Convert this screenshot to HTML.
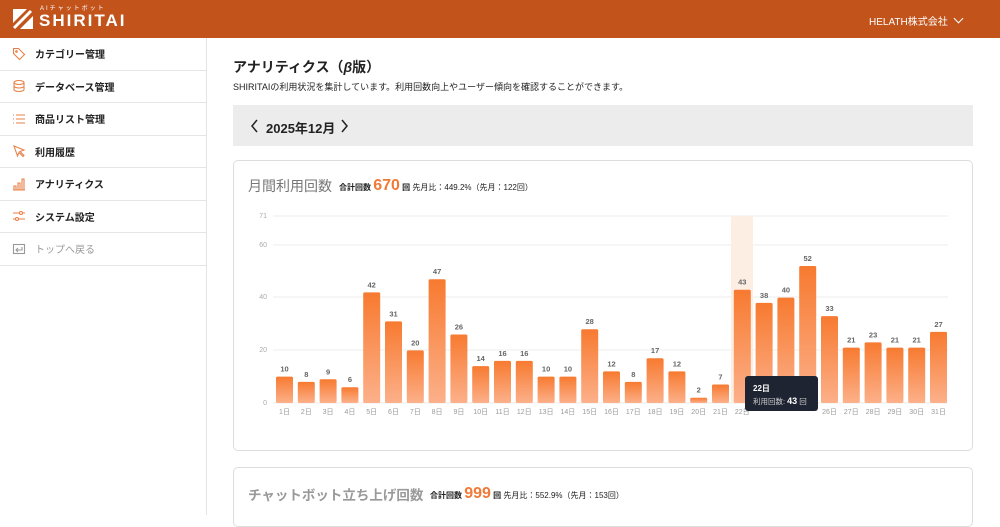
<!DOCTYPE html><html><head><meta charset="utf-8"><style>
*{margin:0;padding:0;box-sizing:border-box}
body{width:1000px;height:515px;overflow:hidden;font-family:"Liberation Sans","Noto Sans CJK JP",sans-serif;background:#fff;color:#222;position:relative}
.hd{position:absolute;left:0;top:0;width:1000px;height:38px;background:#c1531b}
.side{position:absolute;left:0;top:38px;width:207px;height:477px;border-right:1px solid #e4e4e4}
.it{height:32.5px;border-bottom:1px solid #e6e6e6;display:flex;align-items:center;padding-left:12px;font-size:10px;font-weight:bold;color:#222}
.it svg{width:14px;height:14px;margin-right:9px}
</style></head><body>
<div class="hd">
<svg style="position:absolute;left:11px;top:7px" width="24" height="24" viewBox="0 0 24 24"><path d="M2 2h14L2 16z" fill="#fff"/><path d="M9 22L22 9v13z" fill="#fff"/><path d="M3 21L20 4" stroke="#fff" stroke-width="3"/></svg>
<div style="position:absolute;left:40px;top:3px;font-size:6px;color:#fff;letter-spacing:2px">AIチャットボット</div>
<div style="position:absolute;left:39px;top:11px;font-size:17px;color:#fff;letter-spacing:2px;font-weight:bold">SHIRITAI</div>
<div style="position:absolute;left:869px;top:13px;font-size:10px;color:#fff">HELATH株式会社 <span style="display:inline-block;width:7px;height:7px;border-right:1.3px solid #fff;border-bottom:1.3px solid #fff;transform:rotate(45deg);margin-left:4px;position:relative;top:-3px"></span></div>
</div>
<div class="side">
<div class="it"><svg viewBox="0 0 14 14" fill="none" stroke="#e8804a" stroke-width="1.1"><path d="M1.5 1.5h5l6 6-5 5-6-6z"/><circle cx="4.5" cy="4.5" r=".8"/></svg>カテゴリー管理</div>
<div class="it"><svg viewBox="0 0 14 14" fill="none" stroke="#e8804a" stroke-width="1.1"><ellipse cx="7" cy="3.5" rx="5" ry="2"/><path d="M2 3.5v7c0 1.1 2.2 2 5 2s5-.9 5-2v-7M2 7c0 1.1 2.2 2 5 2s5-.9 5-2"/></svg>データベース管理</div>
<div class="it"><svg viewBox="0 0 14 14" fill="none" stroke="#e8804a" stroke-width="1.1"><path d="M1 3h1M1 7h1M1 11h1M4 3h9M4 7h9M4 11h9"/></svg>商品リスト管理</div>
<div class="it"><svg viewBox="0 0 14 14" fill="none" stroke="#e8804a" stroke-width="1.1"><path d="M2 2l10 4-4 1.5 4 4-1 1-4-4L5.5 12z"/></svg>利用履歴</div>
<div class="it"><svg viewBox="0 0 14 14" fill="none" stroke="#e8804a" stroke-width="1.1"><path d="M1 13h12M2 13V9h2v4M6 13V6h2v7M10 13V2h2v11"/></svg>アナリティクス</div>
<div class="it"><svg viewBox="0 0 14 14" fill="none" stroke="#e8804a" stroke-width="1.1"><path d="M1 4h12M1 10h12"/><circle cx="9" cy="4" r="1.5" fill="#fff"/><circle cx="5" cy="10" r="1.5" fill="#fff"/></svg>システム設定</div>
<div class="it" style="color:#999;font-weight:normal"><svg viewBox="0 0 14 14" fill="none" stroke="#999" stroke-width="1.1"><rect x="1.5" y="2.5" width="11" height="9"/><path d="M10 5v3H4M6 6L4 8l2 2"/></svg>トップへ戻る</div>
</div>
<div style="position:absolute;left:233px;top:57px;font-size:14px;font-weight:bold">アナリティクス（<i>β</i>版）</div>
<div style="position:absolute;left:233px;top:80px;font-size:9px;color:#222">SHIRITAIの利用状況を集計しています。利用回数向上やユーザー傾向を確認することができます。</div>
<div style="position:absolute;left:233px;top:105px;width:740px;height:41px;background:#ececec"></div>
<svg style="position:absolute;left:248px;top:118px" width="110" height="16"><path d="M9 2L4 8l5 6M94 2l5 6-5 6" fill="none" stroke="#222" stroke-width="1.5"/></svg>
<div style="position:absolute;left:266px;top:118px;font-size:13px;font-weight:bold;color:#222">2025年12月</div>
<div style="position:absolute;left:233px;top:160px;width:740px;height:291px;border:1px solid #ddd;border-radius:5px"></div>
<div style="position:absolute;left:248px;top:176px;font-size:14px;color:#777">月間利用回数</div>
<div style="position:absolute;left:339px;top:177px;font-size:8px;font-weight:bold;white-space:nowrap">合計回数 <span style="font-size:16px;color:#f07a37">670</span> 回 <span style="font-weight:normal">先月比：449.2%（先月：122回）</span></div>
<svg style="position:absolute;left:0;top:0" width="1000" height="515">
<defs><linearGradient id="g" x1="0" y1="0" x2="0" y2="1"><stop offset="0" stop-color="#f77a30"/><stop offset="1" stop-color="#fcb08a"/></linearGradient></defs>
<g stroke="#eee" stroke-width="1"><line x1="273" x2="948" y1="216" y2="216"/><line x1="273" x2="948" y1="245" y2="245"/><line x1="273" x2="948" y1="297" y2="297"/><line x1="273" x2="948" y1="350" y2="350"/><line x1="273" x2="948" y1="403" y2="403"/></g>
<g font-size="7" fill="#aaa" text-anchor="end" font-family="Liberation Sans"><text x="267" y="218">71</text><text x="267" y="247">60</text><text x="267" y="299">40</text><text x="267" y="352">20</text><text x="267" y="405">0</text></g>
<rect x="731" y="216" width="22" height="187" fill="#fdeee4"/>
<g id="bars"></g>
<rect x="745" y="376" width="73" height="35" rx="3" fill="#1f2433"/>
<text x="753" y="391" font-size="8" fill="#fff" font-weight="bold" font-family="Liberation Sans,Noto Sans CJK JP">22日</text>
<text x="753" y="404" font-size="7.5" fill="#ccc" font-family="Liberation Sans,Noto Sans CJK JP">利用回数: <tspan fill="#fff" font-weight="bold" font-size="9">43</tspan> 回</text>
</svg>
<div style="position:absolute;left:233px;top:467px;width:740px;height:60px;border:1px solid #ddd;border-radius:5px"></div>
<div style="position:absolute;left:248px;top:484px;font-size:13.5px;color:#999;font-weight:bold">チャットボット立ち上げ回数</div>
<div style="position:absolute;left:430px;top:485px;font-size:8px;font-weight:bold;white-space:nowrap">合計回数 <span style="font-size:16px;color:#f07a37">999</span> 回 <span style="font-weight:normal">先月比：552.9%（先月：153回）</span></div>
<script>
var v=[10,8,9,6,42,31,20,47,26,14,16,16,10,10,28,12,8,17,12,2,7,43,38,40,52,33,21,23,21,21,27],s="";
for(var i=0;i<31;i++){var x=276+i*21.8,h=v[i]*2.634,y=403-h;
s+='<rect x="'+x+'" y="'+y+'" width="17" height="'+h+'" rx="1.5" fill="url(#g)"/>';
s+='<text x="'+(x+8.5)+'" y="'+(y-5)+'" font-size="7.5" fill="#666" text-anchor="middle" font-weight="bold" font-family="Liberation Sans">'+v[i]+'</text>';
if(i!=22&&i!=23&&i!=24)s+='<text x="'+(x+8.5)+'" y="414" font-size="7" fill="#999" text-anchor="middle" font-family="Liberation Sans,Noto Sans CJK JP">'+(i+1)+'日</text>';}
document.getElementById('bars').innerHTML=s;
</script>
</body></html>
